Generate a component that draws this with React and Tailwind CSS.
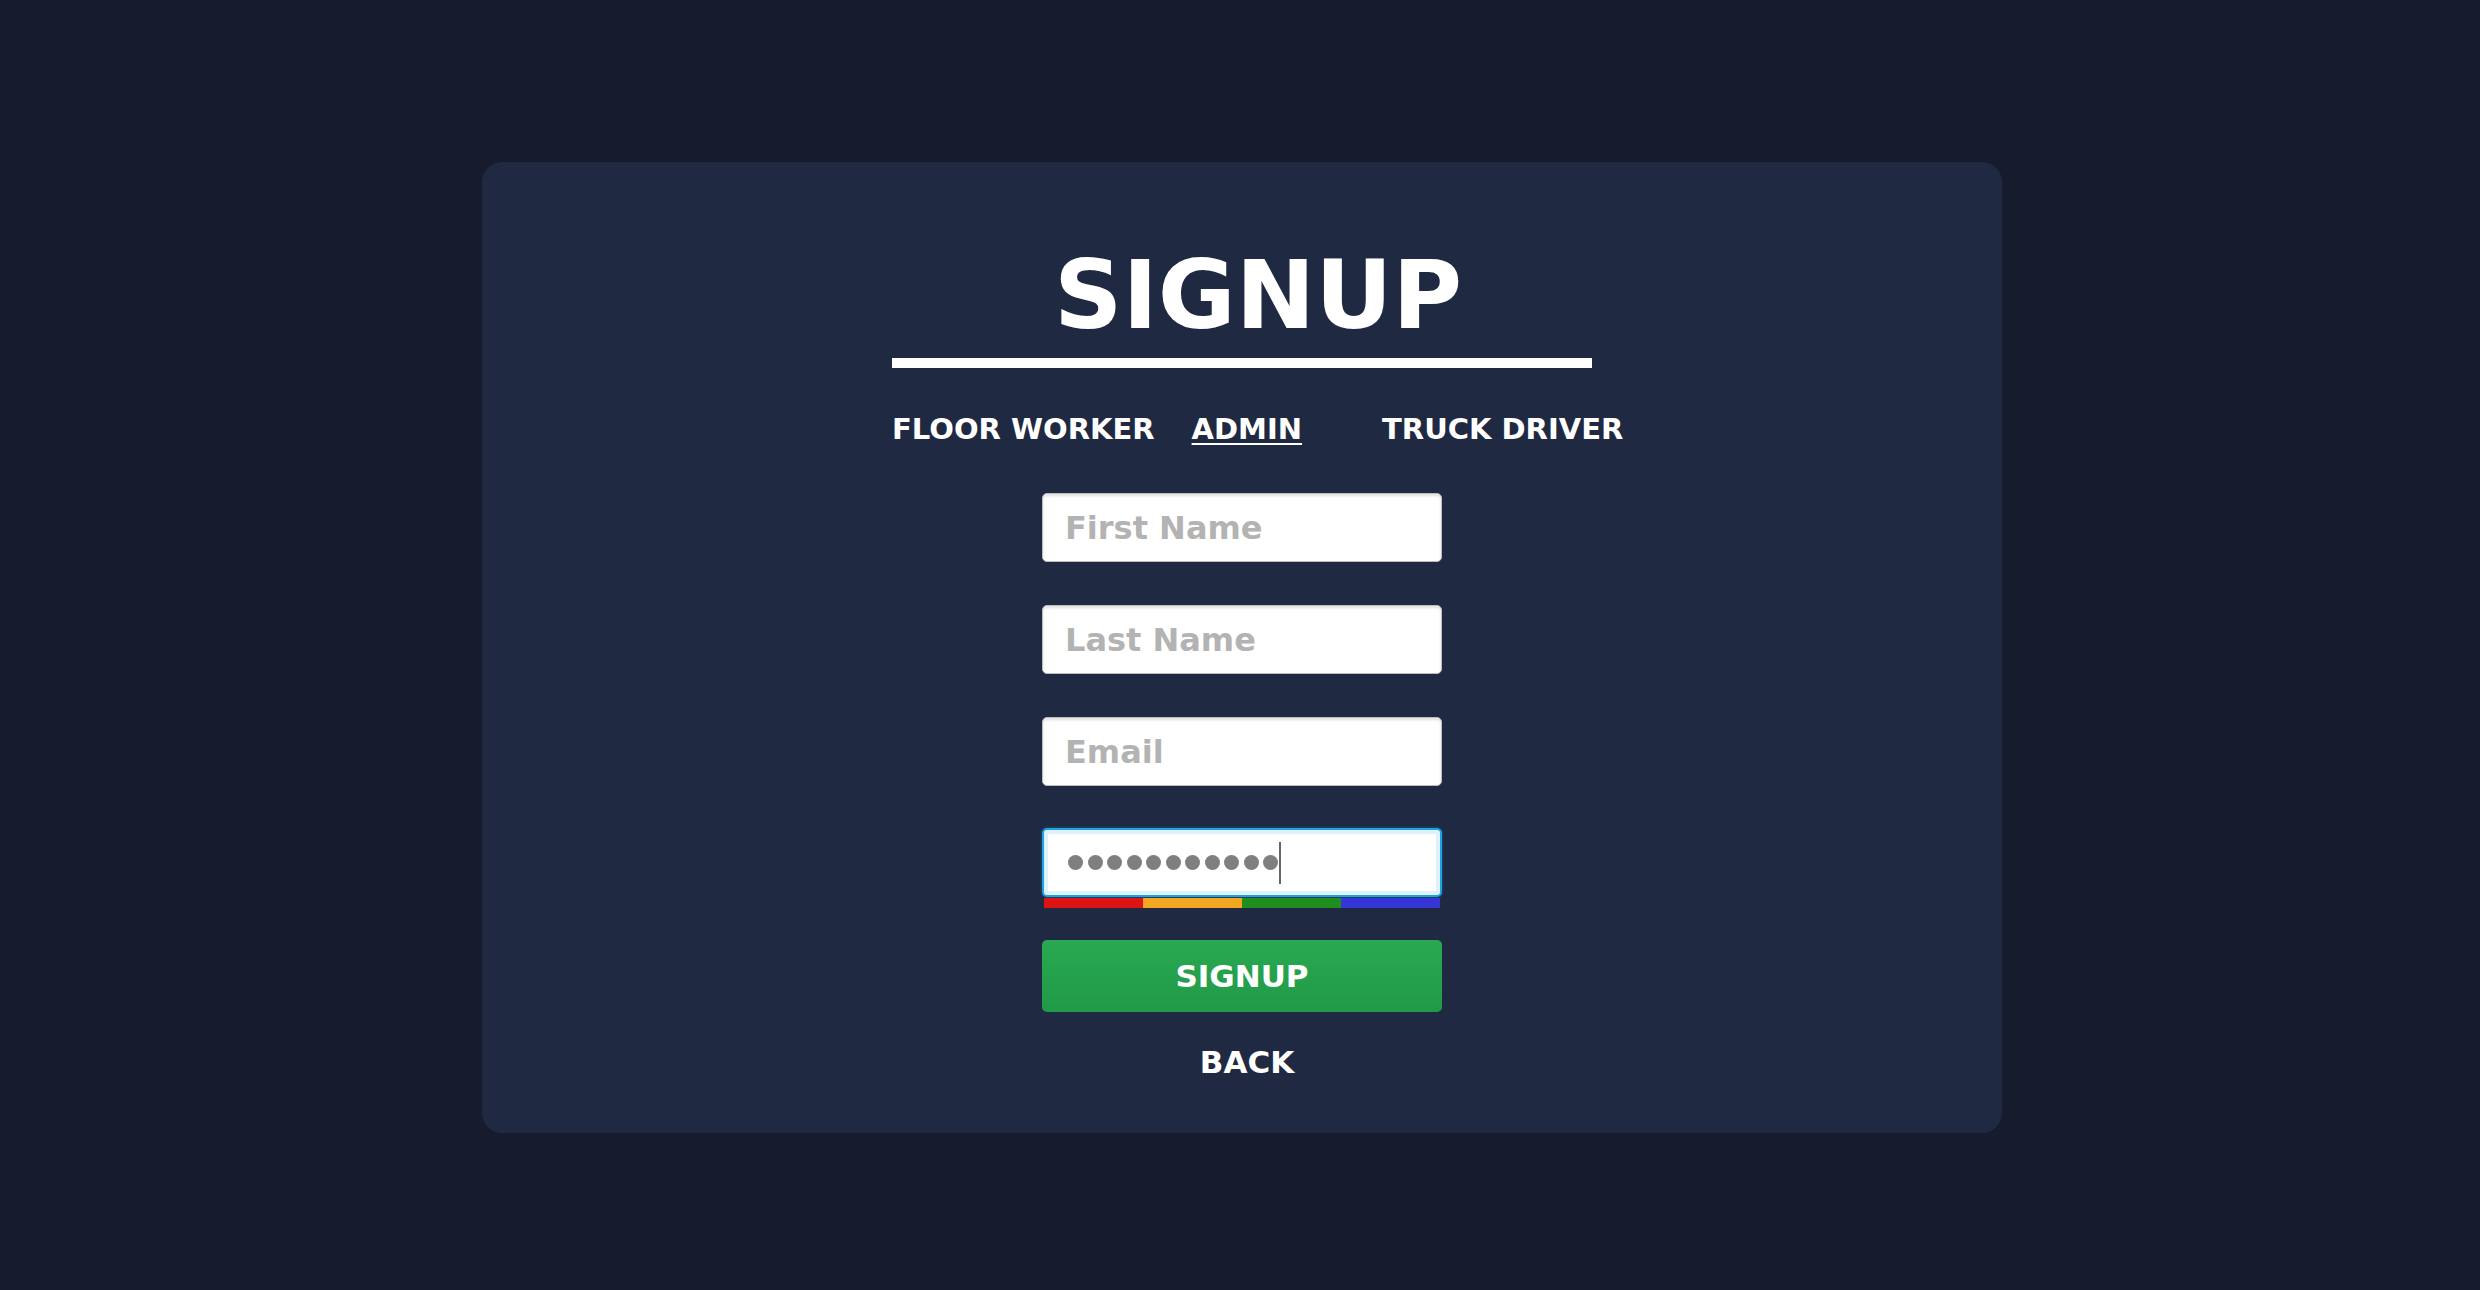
import React from "react";

const font = { fontFamily: '"DejaVu Sans", "Liberation Sans", sans-serif' };

function TextField({ placeholder }) {
  return (
    <input
      type="text"
      placeholder={placeholder}
      className="w-[400px] h-[69px] rounded-[5px] border border-[#bdbdbd] bg-white px-[22px] text-[32px] font-bold text-[#333] placeholder:text-[#b3b3b3] shadow-[inset_0_2px_3px_rgba(0,0,0,0.12)] outline-none"
    />
  );
}

function PasswordField() {
  const dots = Array.from({ length: 11 });
  return (
    <div className="flex flex-col items-center">
      <div className="w-[400px] h-[69px] rounded-[5px] border-2 border-[#1ea4dc] bg-white shadow-[0_0_2px_1px_rgba(20,90,140,0.6),inset_0_0_0_4px_#dff2fa] flex items-center pl-[24px]">
        <div className="flex items-center gap-[4.5px]">
          {dots.map((_, i) => (
            <span key={i} className="w-[15px] h-[15px] rounded-full bg-[#7f7f7f]" />
          ))}
        </div>
        <span className="ml-[1px] w-[2px] h-[42px] bg-[#666]" />
      </div>
      {/* strength meter */}
      <div className="mt-[1px] flex w-[396px] h-[10px]">
        <div className="flex-1 bg-[#dc1414]" />
        <div className="flex-1 bg-[#f3a61f]" />
        <div className="flex-1 bg-[#1f8e1d]" />
        <div className="flex-1 bg-[#3535d6]" />
      </div>
    </div>
  );
}

export default function App() {
  return (
    <div className="min-h-screen w-full bg-[#161b2e] pt-[162px] pl-[4px] flex justify-center" style={font}>
      <div className="w-[1520px] h-[971px] rounded-[20px] bg-[#1f2941] flex flex-col items-center pt-[86px]">
        <h1 className="text-[95px] leading-none font-bold text-white pl-[32px]">SIGNUP</h1>
        <div className="mt-[15px] w-[700px] h-[10px] bg-white" />

        <nav className="mt-[47px] w-[700px] flex items-center text-[29px] leading-none font-bold text-white">
          <button className="whitespace-nowrap">FLOOR WORKER</button>
          <button className="ml-[37px] underline decoration-[2px] underline-offset-[4px]">ADMIN</button>
          <button className="ml-[80px] whitespace-nowrap">TRUCK DRIVER</button>
        </nav>

        <div className="mt-[49px] flex flex-col gap-[43px]">
          <TextField placeholder="First Name" />
          <TextField placeholder="Last Name" />
          <TextField placeholder="Email" />
        </div>

        <div className="mt-[42px]">
          <PasswordField />
        </div>

        <button className="mt-[32px] w-[400px] h-[72px] rounded-[5px] bg-gradient-to-b from-[#29a851] to-[#219a48] text-white text-[31px] font-bold">
          SIGNUP
        </button>

        <button className="mt-[35px] text-white text-[31px] leading-none font-bold pl-[10px]">BACK</button>
      </div>
    </div>
  );
}
